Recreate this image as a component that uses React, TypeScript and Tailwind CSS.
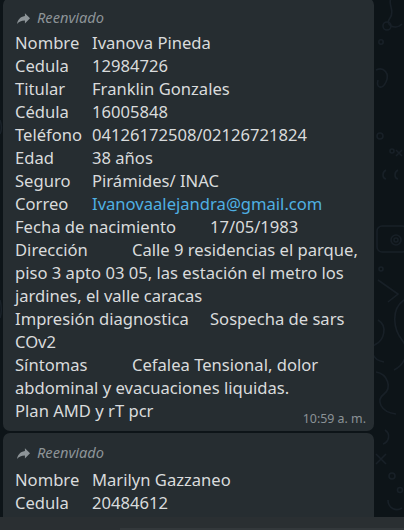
type Row = { label: string; value: string; tab: number; link?: boolean }

const first: Row[] = [
  { label: "Nombre", value: "Ivanova Pineda", tab: 77 },
  { label: "Cedula", value: "12984726", tab: 77 },
  { label: "Titular", value: "Franklin Gonzales", tab: 77 },
  { label: "Cédula", value: "16005848", tab: 77 },
  { label: "Teléfono", value: "04126172508/02126721824", tab: 77 },
  { label: "Edad", value: "38 años", tab: 77 },
  { label: "Seguro", value: "Pirámides/ INAC", tab: 77 },
  { label: "Correo", value: "Ivanovaalejandra@gmail.com", tab: 77, link: true },
  { label: "Fecha de nacimiento", value: "17/05/1983", tab: 195 },
  { label: "Dirección", value: "Calle 9 residencias el parque, piso 3 apto 03 05, las estación el metro los jardines, el valle caracas", tab: 117 },
  { label: "Impresión diagnostica", value: "Sospecha de sars COv2", tab: 195 },
  { label: "Síntomas", value: "Cefalea Tensional, dolor abdominal y evacuaciones liquidas.", tab: 117 },
]

const second: Row[] = [
  { label: "Nombre", value: "Marilyn Gazzaneo", tab: 77 },
  { label: "Cedula", value: "20484612", tab: 77 },
  { label: "Titular", value: "Marilyn Gazzaneo", tab: 77 },
  { label: "Cédula", value: "20484612", tab: 77 },
]

function ForwardIcon() {
  return (
    <svg width="17" height="17" viewBox="0 0 24 24" className="shrink-0">
      <path d="M14 8.6V4.5l7.2 7.2-7.2 7.2v-4.2c-5.1 0-8.7 1.6-11.2 5.2 1-5.2 4.1-10.3 11.2-11.3z" fill="currentColor" />
    </svg>
  )
}

function Line({ row }: { row: Row }) {
  return (
    <div>
      <span className="inline-block" style={{ width: row.tab }}>
        {row.label}
      </span>
      {row.link ? <span className="text-[#4fb0e3]">{row.value}</span> : row.value}
    </div>
  )
}

function Bubble({ rows, extra, time, className, textClass }: { rows: Row[]; extra?: string; time?: string; className?: string; textClass?: string }) {
  return (
    <div className={"relative w-[371px] shrink-0 rounded-[7px] bg-[#262d31] pl-[12px] pr-[6px] pt-[9px] pb-[8px] " + (className ?? "")}>
      <div className="flex h-[22px] items-center gap-[5px] text-[14.6px] italic text-[#8d9498]">
        <ForwardIcon />
        <span>Reenviado</span>
      </div>
      <div className={"text-[16.6px] leading-[23px] text-[#d9dbdc] " + (textClass ?? "mt-[3px]")}>
        {rows.map((r) => (
          <Line key={r.label + r.value} row={r} />
        ))}
        {extra && <div>{extra}</div>}
      </div>
      {time && (
        <span className="absolute right-[8px] bottom-[4px] text-[12.4px] leading-[16px] text-[#8b9296]">
          {time}
        </span>
      )}
    </div>
  )
}

function Doodles() {
  return (
    <svg className="absolute inset-0" width="404" height="530" fill="none" stroke="#182027" strokeWidth="1.6">
      <path d="M392 -4c-6 8 4 14 -2 22s6 12 12 6" />
      <circle cx="387" cy="26" r="4" />
      <circle cx="381" cy="42" r="2.2" />
      <path d="M376 70c8 -4 14 4 10 12s-10 6 -8 -2" />
      <circle cx="380" cy="136" r="3" />
      <circle cx="392" cy="151" r="2" />
      <path d="M396 150l6 6m-6 0l6 -6" />
      <path d="M386 170c-4 2 -4 8 0 9" />
      <path d="M398 170c-4 2 -4 8 0 9" />
      <rect x="377" y="226" width="30" height="26" rx="5" />
      <circle cx="396" cy="240" r="5" />
      <circle cx="396" cy="240" r="2" />
      <circle cx="381" cy="269" r="2" />
      <path d="M378 280l20 14l-10 8" />
      <path d="M404 300c-14 10 -10 30 -2 40s4 24 -8 30" />
      <path d="M378 320c10 6 6 20 -2 24s-4 16 8 18" />
      <path d="M376 372c12 2 16 16 8 22s-4 18 12 20" />
      <path d="M385 430c6 4 4 12 -2 14" />
      <circle cx="392" cy="476" r="3" />
      <circle cx="400" cy="490" r="2.5" />
      <path d="M376 454l10 10m-10 0l10 -10" />
      <path d="M388 500c0 8 8 12 14 8" />
      <path d="M0 120c2 6 2 10 0 14" />
      <path d="M0 300c2 8 2 12 0 18" />
    </svg>
  )
}

export default function App() {
  return (
    <div className="flex h-[530px] w-[404px] flex-col overflow-hidden bg-[#0d1418] font-['Noto_Sans',sans-serif]">
      <div className="relative flex flex-1 flex-col gap-[2px] overflow-hidden pl-[3px]">
        <Doodles />
        <Bubble rows={first} extra="Plan AMD y rT pcr" time="10:59 a. m." className="-mt-[2px] pb-[9px]" textClass="mt-[2px]" />
        <Bubble rows={second} textClass="mt-[4px]" />
      </div>
      <div className="h-[13px] shrink-0 bg-[#2a2f32] pt-[11px]">
        <div className="ml-[120px] h-[2px] bg-[#33383b]" />
      </div>
    </div>
  )
}
